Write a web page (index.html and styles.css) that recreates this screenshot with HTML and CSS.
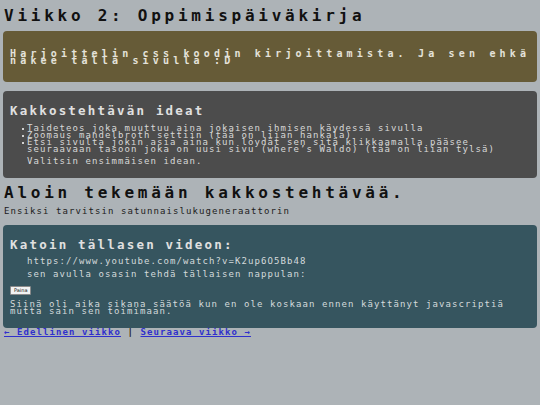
FILE: index.html
```html
<!DOCTYPE html>
<html lang="fi">
<head>
<meta charset="utf-8">
<title>Viikko 2</title>
<link rel="stylesheet" href="styles.css">
</head>
<body>
<h1 class="title">Viikko 2: Oppimispäiväkirja</h1>
<div class="box box-olive">
  <p class="intro">Harjoittelin css koodin kirjoittamista. Ja sen ehkä näkee tällä sivulla :D</p>
</div>
<div class="box box-gray">
  <h2 class="box-heading">Kakkostehtävän ideat</h2>
  <ul class="ideas">
    <li>Taideteos joka muuttuu aina jokaisen ihmisen käydessä sivulla</li>
    <li>Zoomaus mandelbroth settiin (tää on liian hankala)</li>
    <li>Etsi sivulta jokin asia aina kun löydät sen sitä klikkaamalla pääsee seuraavaan tasoon joka on uusi sivu (where’s Waldo) (tää on liian tylsä)</li>
  </ul>
  <p class="small indent note">Valitsin ensimmäisen idean.</p>
</div>
<h1 class="title title-second">Aloin tekemään kakkostehtävää.</h1>
<p class="small lead">Ensiksi tarvitsin satunnaislukugeneraattorin</p>
<div class="box box-teal">
  <h2 class="box-heading">Katoin tällasen videon:</h2>
  <p class="small indent url">https://www.youtube.com/watch?v=K2up6O5Bb48</p>
  <p class="small indent helped">sen avulla osasin tehdä tällaisen nappulan:</p>
  <button class="press" type="button">Paina</button>
  <p class="small story">Siinä oli aika sikana säätöä kun en ole koskaan ennen käyttänyt javascriptiä mutta sain sen toimimaan.</p>
</div>
<nav class="small links"><a href="#">← Edellinen viikko</a> <span class="sep">|</span> <a href="#">Seuraava viikko →</a></nav>
</body>
</html>
```
FILE: styles.css
```css
body {
  margin: 0;
  padding: 3px;
  background: #adb3b7;
  font-family: "DejaVu Sans Mono", "Liberation Mono", monospace;
}

.title {
  margin: 5px 0 0 1px;
  font-size: 16px;
  line-height: 16px;
  letter-spacing: 3.75px;
  font-weight: bold;
  color: #111;
}

.title-second {
  margin-top: 7px;
}

.box {
  border-radius: 4px;
  color: #dcdcdc;
}

.box-olive {
  margin-top: 7px;
  background: #665b37;
  padding: 19px 3px 18px 7px;
}

.box-gray {
  margin-top: 9px;
  background: #4c4c4c;
  padding: 14px 7px 13px;
}

.box-teal {
  margin-top: 10px;
  background: #36555f;
  padding: 14px 7px 13px;
}

.intro {
  margin: 0;
  font-size: 10px;
  line-height: 7px;
  letter-spacing: 4.18px;
  font-weight: bold;
  color: #e4e2da;
}

.box-heading {
  margin: 0;
  font-size: 12.5px;
  line-height: 12px;
  letter-spacing: 2.2px;
  font-weight: bold;
  color: #e0e0e0;
}

.small {
  font-size: 9px;
  line-height: 7px;
  letter-spacing: 1.08px;
}

.ideas {
  margin: 8px 0 0;
  padding: 0 30px 0 17px;
  list-style: none;
  font-size: 9px;
  line-height: 7px;
  letter-spacing: 1.08px;
  color: #d8d8d8;
}

.ideas li {
  position: relative;
}

.ideas li::before {
  content: "";
  position: absolute;
  left: -5px;
  top: 3px;
  width: 2px;
  height: 2px;
  background: #d0d0d0;
}

.indent {
  margin-left: 17px;
}

.note {
  margin-top: 5px;
  margin-bottom: 0;
  color: #d8d8d8;
}

.lead {
  margin: 7px 0 0 1px;
  color: #1c1c1c;
}

.url {
  margin-top: 7px;
  margin-bottom: 0;
  color: #d4dadc;
}

.helped {
  margin-top: 6px;
  margin-bottom: 0;
  color: #d4dadc;
}

.press {
  display: block;
  margin-top: 8px;
  height: 9px;
  padding: 0 3px;
  font-family: "DejaVu Sans", sans-serif;
  font-size: 5px;
  line-height: 7px;
  color: #111;
  background: #f2f2f2;
  border: 1px solid #8a8a8a;
  border-radius: 1px;
}

.story {
  margin: 6px 0 0;
  color: #d4dadc;
}

.links {
  margin: 1px 0 0 1px;
  font-weight: bold;
  color: #222;
}

.links a {
  color: #3030cc;
  text-decoration: underline;
}

.sep {
  color: #222;
}
```
